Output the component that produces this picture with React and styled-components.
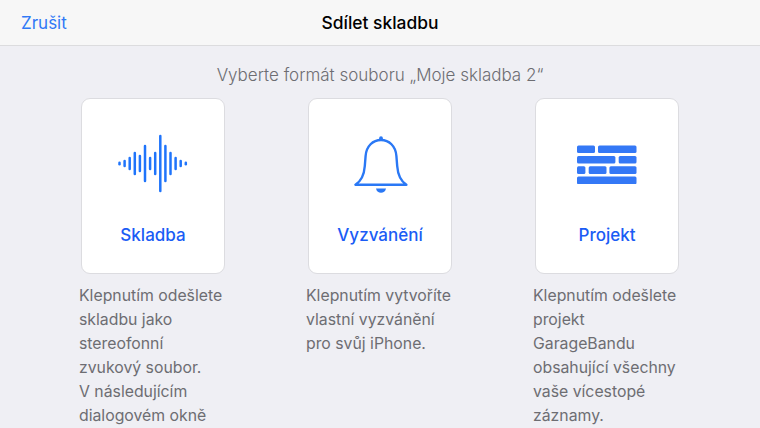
import React from "react";
import styled, { createGlobalStyle } from "styled-components";

const GlobalStyle = createGlobalStyle`
  html, body {
    margin: 0;
    padding: 0;
    width: 760px;
    height: 428px;
    overflow: hidden;
    background: #efeff4;
  }
`;

const bars = [2.5, 6, 12, 22, 16, 36, 12, 22, 56, 36, 22, 12, 6, 2.5];

function WaveIcon() {
  return (
    <svg width="76" height="60" viewBox="0 0 76 60" fill="none">
      {bars.map((h, i) => (
        <line
          key={i}
          x1={4.5 + i * 5.1}
          x2={4.5 + i * 5.1}
          y1={29.5 - h / 2 + 0.6}
          y2={29.5 + h / 2 - 0.6}
          stroke="#1f74fb"
          strokeWidth="2.5"
          strokeLinecap="round"
        />
      ))}
    </svg>
  );
}

function BellIcon() {
  return (
    <svg width="60" height="60" viewBox="0 0 60 60" fill="none">
      <path
        d="M5.4 50.7H56.4C50.5 47 47.8 40 47.2 32L46.4 22C45.7 12 39 6 31 6C23 6 16.3 12 15.6 22L14.8 32C14.2 40 11.5 47 5.4 50.7Z"
        stroke="#2a78f5"
        strokeWidth="2.4"
        strokeLinejoin="round"
      />
      <circle cx="31" cy="4.2" r="1.9" fill="#2a78f5" />
      <path d="M26 54.6H36C35.4 57.6 33.4 58.8 31 58.8C28.6 58.8 26.6 57.6 26 54.6Z" fill="#2a78f5" />
    </svg>
  );
}

const bricks = [
  [0, 0, 18, 7.6],
  [21, 0, 38.5, 7.6],
  [0, 10.4, 38.4, 7.6],
  [41.7, 10.4, 17.8, 7.6],
  [0, 20.8, 8.4, 7.6],
  [11.7, 20.8, 17.8, 7.6],
  [32.4, 20.8, 27.1, 7.6],
  [0, 31, 59.5, 7.8],
];

function BrickIcon() {
  return (
    <svg width="60" height="39" viewBox="0 -0.5 60 39">
      {bricks.map(([x, y, w, h], i) => (
        <rect key={i} x={x} y={y} width={w} height={h} rx="1.5" fill="#3478f6" />
      ))}
    </svg>
  );
}

const options = [
  {
    label: "Skladba",
    icon: <WaveIcon />,
    lines: ["Klepnutím odešlete", "skladbu jako", "stereofonní", "zvukový soubor.", "V následujícím", "dialogovém okně"],
  },
  {
    label: "Vyzvánění",
    icon: <BellIcon />,
    lines: ["Klepnutím vytvoříte", "vlastní vyzvánění", "pro svůj iPhone."],
  },
  {
    label: "Projekt",
    icon: <BrickIcon />,
    lines: ["Klepnutím odešlete", "projekt", "GarageBandu", "obsahující všechny", "vaše vícestopé", "záznamy."],
  },
];

export default function App() {
  return (
    <Page>
      <GlobalStyle />
      <NavBar>
        <Cancel>Zrušit</Cancel>
        <Title>Sdílet skladbu</Title>
      </NavBar>
      <Prompt>Vyberte formát souboru „Moje skladba 2“</Prompt>
      <Columns>
        {options.map((o) => (
          <Column key={o.label}>
            <Card>
              <IconSlot>{o.icon}</IconSlot>
              <CardLabel>{o.label}</CardLabel>
            </Card>
            <Description>
              {o.lines.map((l) => (
                <div key={l}>{l}</div>
              ))}
            </Description>
          </Column>
        ))}
      </Columns>
    </Page>
  );
}

const Page = styled.div`
  width: 760px;
  height: 428px;
  overflow: hidden;
  background: #efeff4;
  font-family: Inter, "Liberation Sans", sans-serif;
`;

const NavBar = styled.header`
  height: 45px;
  box-sizing: content-box;
  display: flex;
  align-items: center;
  justify-content: center;
  position: relative;
  background: #f7f7f7;
  border-bottom: 1px solid #dcdcde;
`;

const Cancel = styled.a`
  position: absolute;
  left: 21px;
  top: 13px;
  font-size: 17px;
  line-height: 20px;
  color: #3079f6;
`;

const Title = styled.h1`
  margin: 0;
  font-size: 17.4px;
  line-height: 20px;
  font-weight: 500;
  color: #000;
`;

const Prompt = styled.p`
  margin: 0;
  padding-top: 18px;
  height: 34px;
  font-size: 17px;
  line-height: 22px;
  font-weight: 350;
  text-align: center;
  color: #6d6d72;
`;

const Columns = styled.div`
  display: flex;
  gap: 83px;
  padding-left: 81px;
`;

const Column = styled.section`
  width: 144px;
`;

const Card = styled.div`
  box-sizing: border-box;
  width: 144px;
  height: 176px;
  display: flex;
  flex-direction: column;
  align-items: center;
  background: #fff;
  border: 1px solid #dcdce0;
  border-radius: 9px;
`;

const IconSlot = styled.div`
  height: 125px;
  padding-top: 5px;
  box-sizing: border-box;
  display: flex;
  align-items: center;
  justify-content: center;
`;

const CardLabel = styled.div`
  font-size: 17px;
  line-height: 22px;
  font-weight: 500;
  color: #1a5cf5;
`;

const Description = styled.div`
  margin-top: 10px;
  margin-left: -2px;
  font-size: 15.8px;
  line-height: 24px;
  white-space: nowrap;
  color: #6d6d72;
`;
